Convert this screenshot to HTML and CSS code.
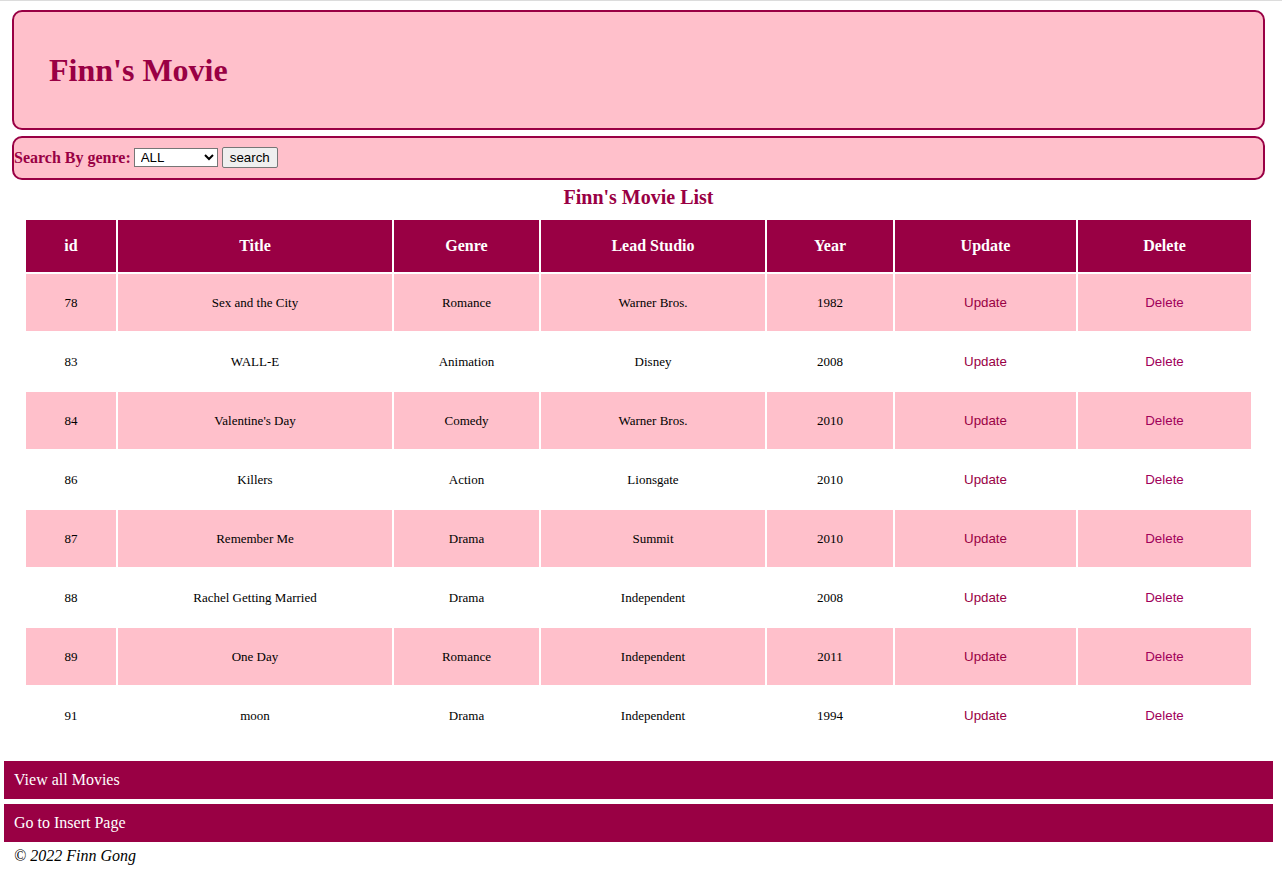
FILE: index.html
```html
<!DOCTYPE html>
<html>
<head>
<meta charset="utf-8">
<title>Finn's Movie</title>
<link rel="stylesheet" href="styles.css">
</head>
<body>
<div class="page">
  <header class="banner">
    <h1 class="banner-title">Finn's Movie</h1>
  </header>
  <form class="search">
    <label class="search-label" for="genre">Search By genre:</label>
    <select id="genre" class="search-select">
      <option>ALL</option>
      <option>Romance</option>
      <option>Animation</option>
      <option>Comedy</option>
      <option>Action</option>
      <option>Drama</option>
    </select>
    <button type="button" class="search-btn">search</button>
  </form>
  <h3 class="list-title">Finn's Movie List</h3>
  <table class="movies">
    <colgroup>
      <col class="c-id"><col class="c-title"><col class="c-genre"><col class="c-studio"><col class="c-year"><col class="c-upd"><col class="c-del">
    </colgroup>
    <thead>
      <tr><th>id</th><th>Title</th><th>Genre</th><th>Lead Studio</th><th>Year</th><th>Update</th><th>Delete</th></tr>
    </thead>
    <tbody>
      <tr><td>78</td><td>Sex and the City</td><td>Romance</td><td>Warner Bros.</td><td>1982</td><td><button class="lnk upd">Update</button></td><td><button class="lnk del">Delete</button></td></tr>
      <tr><td>83</td><td>WALL-E</td><td>Animation</td><td>Disney</td><td>2008</td><td><button class="lnk upd">Update</button></td><td><button class="lnk del">Delete</button></td></tr>
      <tr><td>84</td><td>Valentine's Day</td><td>Comedy</td><td>Warner Bros.</td><td>2010</td><td><button class="lnk upd">Update</button></td><td><button class="lnk del">Delete</button></td></tr>
      <tr><td>86</td><td>Killers</td><td>Action</td><td>Lionsgate</td><td>2010</td><td><button class="lnk upd">Update</button></td><td><button class="lnk del">Delete</button></td></tr>
      <tr><td>87</td><td>Remember Me</td><td>Drama</td><td>Summit</td><td>2010</td><td><button class="lnk upd">Update</button></td><td><button class="lnk del">Delete</button></td></tr>
      <tr><td>88</td><td>Rachel Getting Married</td><td>Drama</td><td>Independent</td><td>2008</td><td><button class="lnk upd">Update</button></td><td><button class="lnk del">Delete</button></td></tr>
      <tr><td>89</td><td>One Day</td><td>Romance</td><td>Independent</td><td>2011</td><td><button class="lnk upd">Update</button></td><td><button class="lnk del">Delete</button></td></tr>
      <tr><td>91</td><td>moon</td><td>Drama</td><td>Independent</td><td>1994</td><td><button class="lnk upd">Update</button></td><td><button class="lnk del">Delete</button></td></tr>
    </tbody>
  </table>
  <nav class="nav">
    <a class="nav-bar" href="#">View all Movies</a>
    <a class="nav-bar" href="#">Go to Insert Page</a>
  </nav>
  <footer class="foot">© 2022 Finn Gong</footer>
</div>
</body>
</html>
```
FILE: styles.css
```css
html {
  border-top: 1px solid #dcdcdc;
}
body {
  margin: 0;
  font-family: "Liberation Serif", "Times New Roman", serif;
  background: #fff;
}
.page {
  width: 1269px;
  margin: 0 0 0 4px;
}
.banner {
  box-sizing: border-box;
  height: 120px;
  margin: 9px 8px 0 8px;
  border: 2px solid #990044;
  border-radius: 10px;
  background: #ffc0cb;
  display: flex;
  align-items: center;
  padding: 0 0 0 35px;
}
.banner-title {
  margin: 0;
  font-size: 32px;
  font-weight: bold;
  color: #990044;
  line-height: 37px;
}
.search {
  box-sizing: border-box;
  height: 44px;
  margin: 6px 8px 0 8px;
  border: 2px solid #990044;
  border-radius: 10px;
  background: #ffc0cb;
  display: flex;
  align-items: center;
  padding: 0 0 1px 0;
}
.search-label {
  font-size: 16px;
  font-weight: bold;
  color: #990044;
  margin-right: 3px;
}
.search-select {
  width: 84px;
  height: 19px;
  font-family: "Liberation Sans", Arial, sans-serif;
  font-size: 13.33px;
  margin: 0;
  border: 1px solid #767676;
  border-radius: 0;
  background: #fff;
  padding: 0 0 0 2px;
}
.search-btn {
  font-family: "Liberation Sans", Arial, sans-serif;
  font-size: 13.33px;
  margin-left: 4px;
  height: 21px;
  width: 56px;
  padding: 0;
  border: 1px solid #767676;
  border-radius: 2px;
  background: #efefef;
  color: #000;
}
.list-title {
  margin: 6px 0 9px 0;
  font-size: 20px;
  line-height: 23px;
  text-align: center;
  color: #990044;
  font-weight: bold;
}
.movies {
  width: 1229px;
  margin: 0 20px;
  table-layout: fixed;
  border-collapse: separate;
  border-spacing: 2px;
}
.c-id { width: 90px; }
.c-title { width: 274px; }
.c-genre { width: 145px; }
.c-studio { width: 224px; }
.c-year { width: 126px; }
.c-upd { width: 181px; }
.c-del { width: 173px; }
.movies th {
  height: 52px;
  padding: 0;
  background: #990044;
  color: #fff;
  font-size: 16px;
  font-weight: bold;
  text-align: center;
}
.movies td {
  height: 57px;
  padding: 0;
  font-size: 13px;
  text-align: center;
  color: #000;
}
.movies tbody tr:nth-child(odd) td {
  background: #ffc0cb;
}
.lnk {
  font-family: "Liberation Sans", Arial, sans-serif;
  font-size: 13.33px;
  background: none;
  border: none;
  padding: 0;
  cursor: pointer;
}
.upd { color: #990044; }
.del { color: #a0005a; }
.nav {
  margin-top: 15px;
  display: flex;
  flex-direction: column;
  gap: 5px;
}
.nav-bar {
  display: flex;
  align-items: center;
  height: 38px;
  padding-left: 10px;
  background: #990044;
  color: #fff;
  font-size: 16px;
  text-decoration: none;
}
.foot {
  margin-top: 5px;
  padding-left: 10px;
  font-style: italic;
  font-size: 16px;
  line-height: 18px;
}
```
